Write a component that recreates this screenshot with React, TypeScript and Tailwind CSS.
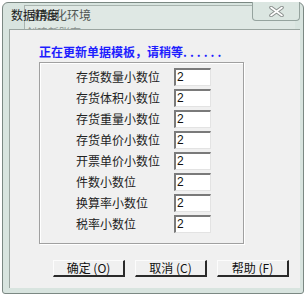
import React from "react";

const rows = [
  "存货数量小数位",
  "存货体积小数位",
  "存货重量小数位",
  "存货单价小数位",
  "开票单价小数位",
  "件数小数位",
  "换算率小数位",
  "税率小数位",
];

const font = { fontFamily: '"Noto Sans CJK SC", "Noto Sans", sans-serif' };

function Btn({ label }: { label: string }) {
  return (
    <div className="w-[72px] h-[17px] bg-[#f0f0f0] border-t border-l border-t-[#fcfcfc] border-l-[#fcfcfc] border-b-2 border-r-2 border-b-[#2a2a2a] border-r-[#2a2a2a] flex items-center justify-center text-[12px] leading-none text-[#111]">
      {label}
    </div>
  );
}

export default function App() {
  return (
    <div className="w-[307px] h-[297px] bg-white overflow-hidden" style={font}>
      <div className="relative ml-[2px] mt-[2px] w-[302px] h-[292px] border border-[#7b8883] rounded-t-[6px] rounded-b-[3px] bg-[#d8e4df] pl-[6px] pr-[3px] pt-[26px] pb-[5px]">
        {/* ghost window behind title */}
        <div className="absolute left-[21px] top-[2px] right-[8px] h-[26px] border-l border-t border-[#a9b4af] bg-[#dfe8e4]" />
        <div className="absolute left-[28px] top-[6px] text-[12px] leading-none text-[#4f5552]">初始化环境</div>
        <div className="absolute left-[23px] top-[24px] text-[11px] leading-none text-[#8a908d]">创建新账套</div>
        {/* title */}
        <div className="absolute left-[8px] top-[6px] text-[12px] leading-none text-[#1a1a1a]">数据精度</div>
        {/* close button */}
        <div className="absolute right-[3px] top-[-1px] w-[48px] h-[19px] border border-t-0 border-[#95a39e] rounded-b-[4px] bg-[#dbe6e1] flex items-center justify-center">
          <svg width="15" height="11" viewBox="0 0 15 11">
            <path d="M2 1.5 L13 9.5 M13 1.5 L2 9.5" stroke="#8a8f8d" strokeWidth="3.6" strokeLinecap="round" />
            <path d="M2 1.5 L13 9.5 M13 1.5 L2 9.5" stroke="#ffffff" strokeWidth="1.6" strokeLinecap="round" />
          </svg>
        </div>
        {/* client area */}
        <div className="relative w-full h-full bg-[#f0f0f0] border-t border-l border-[#9aa5a0] pl-[29px] pt-[15px]">
          <div className="text-[12px] leading-[14px] text-[#1e1eff] font-bold">
            正在更新单据模板，请稍等<span className="tracking-[3px]">......</span>
          </div>
          <div className="mt-[3px] w-[205px] h-[182px] border border-[#a0a0a0] shadow-[inset_1px_1px_0_#ffffff,1px_1px_0_#ffffff] pt-[5px] pl-[36px] flex flex-col gap-[3px]">
            {rows.map((r) => (
              <div key={r} className="flex items-center h-[18px]">
                <div className="w-[98px] text-[12px] leading-none text-[#222]">{r}</div>
                <div className="w-[37px] h-[18px] bg-white border-t-2 border-l-2 border-t-[#7a7a7a] border-l-[#7a7a7a] border-b border-r border-b-[#e3e3e3] border-r-[#e3e3e3] text-[12px] leading-[15px] pl-[1px] text-[#111]" style={{ fontFamily: '"Liberation Sans", Arial, sans-serif' }}>
                  2
                </div>
              </div>
            ))}
          </div>
          <div className="mt-[16px] ml-[14px] flex gap-[10px]">
            <Btn label="确定 (O)" />
            <Btn label="取消 (C)" />
            <Btn label="帮助 (F)" />
          </div>
        </div>
      </div>
    </div>
  );
}
